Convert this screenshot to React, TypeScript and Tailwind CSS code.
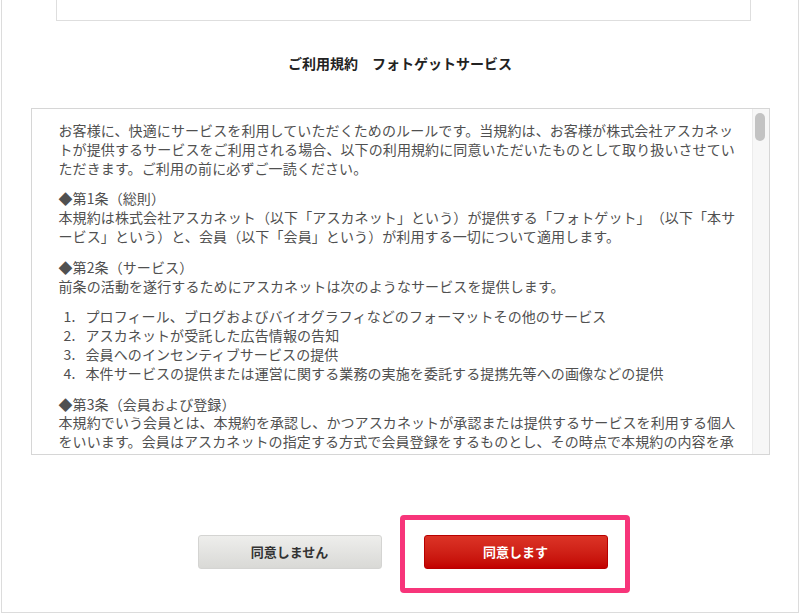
const INTRO = [
  "お客様に、快適にサービスを利用していただくためのルールです。当規約は、お客様が株式会社アスカネッ",
  "トが提供するサービスをご利用される場合、以下の利用規約に同意いただいたものとして取り扱いさせてい",
  "ただきます。ご利用の前に必ずご一読ください。",
];

const ARTICLE1 = [
  "本規約は株式会社アスカネット（以下「アスカネット」という）が提供する「フォトゲット」（以下「本サ",
  "ービス」という）と、会員（以下「会員」という）が利用する一切について適用します。",
];

const SERVICES = [
  "プロフィール、ブログおよびバイオグラフィなどのフォーマットその他のサービス",
  "アスカネットが受託した広告情報の告知",
  "会員へのインセンティブサービスの提供",
  "本件サービスの提供または運営に関する業務の実施を委託する提携先等への画像などの提供",
];

const ARTICLE3 = [
  "本規約でいう会員とは、本規約を承認し、かつアスカネットが承認または提供するサービスを利用する個人",
  "をいいます。会員はアスカネットの指定する方式で会員登録をするものとし、その時点で本規約の内容を承",
];

function Lines({ lines }: { lines: string[] }) {
  return (
    <>
      {lines.map((line) => (
        <div key={line} className="whitespace-nowrap">
          {line}
        </div>
      ))}
    </>
  );
}

function TermsBox() {
  return (
    <div className="mx-auto mt-[35px] flex h-[347px] w-[739px] border border-[#d6d6d6] bg-white">
      <div className="flex-1 overflow-hidden pl-[27px] pt-[12px] text-[14px] leading-[18.8px] tracking-[0.1px] text-[#505050] [text-spacing-trim:space-all]">
        <div className="flex flex-col gap-[12px]">
          <div>
            <Lines lines={INTRO} />
          </div>

          <div>
            <div>◆第1条（総則）</div>
            <Lines lines={ARTICLE1} />
          </div>

          <div>
            <div>◆第2条（サービス）</div>
            <div>前条の活動を遂行するためにアスカネットは次のようなサービスを提供します。</div>
          </div>

          <div>
            {SERVICES.map((item, i) => (
              <div key={item} className="flex whitespace-nowrap">
                <span className="w-[27px] pl-[5px]">{i + 1}.</span>
                <span>{item}</span>
              </div>
            ))}
          </div>

          <div>
            <div>◆第3条（会員および登録）</div>
            <Lines lines={ARTICLE3} />
          </div>
        </div>
      </div>

      {/* scrollbar */}
      <div className="w-[17px] border-l border-[#ececec] bg-[#f7f7f7] pl-[2px] pt-[4px]">
        <div className="h-[28px] w-[10px] rounded-full bg-[#c3c3c3]" />
      </div>
    </div>
  );
}

export default function App() {
  return (
    <div
      className="h-[614px] w-[800px] overflow-hidden bg-white"
      style={{ fontFamily: '"Noto Sans CJK JP", "Noto Sans", sans-serif' }}
    >
      <div className="ml-[1px] h-[613px] w-[798px] border-x border-b border-[#dcdcdc]">
        <div className="ml-[54px] h-[21px] w-[695px] border-x border-b border-[#dedede]" />

        <h1 className="mt-[32px] text-center text-[14px] font-bold leading-[20px] text-[#222] [text-spacing-trim:space-all]">
          ご利用規約　フォトゲットサービス
        </h1>

        <TermsBox />

        <div className="mt-[80px] flex justify-center gap-[42px] pl-[5px]">
          <button className="h-[34px] w-[184px] rounded-[3px] border border-[#d4d4d2] bg-gradient-to-b from-[#eeeeec] to-[#d9d9d6] text-[13px] font-bold text-[#333]">
            同意しません
          </button>

          <div className="relative">
            <button className="h-[34px] w-[184px] rounded-[3px] border border-[#b80000] bg-gradient-to-b from-[#dc3326] to-[#c20000] text-[13px] font-bold text-white">
              同意します
            </button>
            <span className="pointer-events-none absolute -bottom-[24px] -left-[24px] -right-[22px] -top-[20px] rounded-[4px] border-[5px] border-[#f7357a]" />
          </div>
        </div>
      </div>
    </div>
  );
}
